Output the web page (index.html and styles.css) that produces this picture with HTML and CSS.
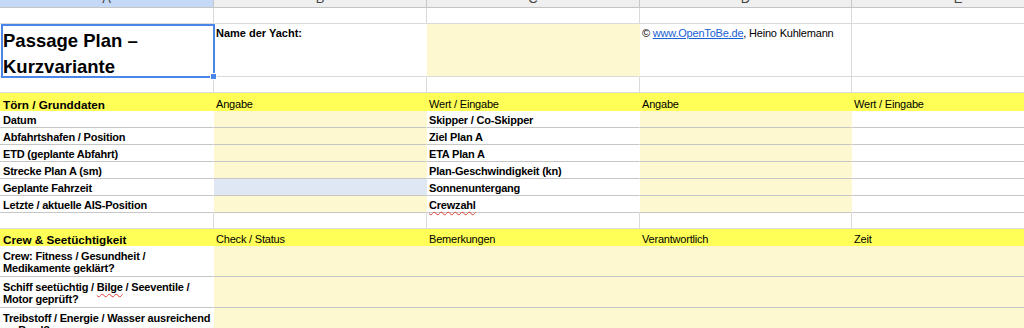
FILE: index.html
```html
<!DOCTYPE html>
<html lang="de">
<head>
<meta charset="utf-8">
<title>Passage Plan – Kurzvariante</title>
<link rel="stylesheet" href="styles.css">
</head>
<body>
<div class="sheet">
  <div class="hd sel"><span>A</span></div>
  <div class="hd"><span>B</span></div>
  <div class="hd"><span>C</span></div>
  <div class="hd"><span>D</span></div>
  <div class="hd"><span>E</span></div>

  <div class="c"></div><div class="c"></div><div class="c"></div><div class="c"></div><div class="c"></div>

  <div class="c title"><span class="t">Passage Plan –<br>Kurzvariante</span></div>
  <div class="c top b nr wide"><span class="t">Name der Yacht:</span></div>
  <div class="c ly"></div>
  <div class="c top"><span class="t">© <a class="link" href="#">www.OpenToBe.de</a>, Heino Kuhlemann</span></div>
  <div class="c"></div>

  <div class="c"></div><div class="c"></div><div class="c"></div><div class="c"></div><div class="c"></div>

  <div class="c yh b first sect"><span class="t">Törn / Grunddaten</span></div>
  <div class="c yh"><span class="t">Angabe</span></div>
  <div class="c yh"><span class="t">Wert / Eingabe</span></div>
  <div class="c yh"><span class="t">Angabe</span></div>
  <div class="c yh"><span class="t">Wert / Eingabe</span></div>

  <div class="c d b nr first"><span class="t">Datum</span></div>
  <div class="c d ly"></div>
  <div class="c d b nr"><span class="t">Skipper / Co-Skipper</span></div>
  <div class="c d ly"></div>
  <div class="c d"></div>

  <div class="c d b nr first"><span class="t">Abfahrtshafen / Position</span></div>
  <div class="c d ly"></div>
  <div class="c d b nr"><span class="t">Ziel Plan A</span></div>
  <div class="c d ly"></div>
  <div class="c d"></div>

  <div class="c d b nr first"><span class="t">ETD (geplante Abfahrt)</span></div>
  <div class="c d ly"></div>
  <div class="c d b nr"><span class="t">ETA Plan A</span></div>
  <div class="c d ly"></div>
  <div class="c d"></div>

  <div class="c d b nr first"><span class="t">Strecke Plan A (sm)</span></div>
  <div class="c d ly"></div>
  <div class="c d b nr"><span class="t">Plan-Geschwindigkeit (kn)</span></div>
  <div class="c d ly"></div>
  <div class="c d"></div>

  <div class="c d b nr first"><span class="t">Geplante Fahrzeit</span></div>
  <div class="c d lb"></div>
  <div class="c d b nr"><span class="t">Sonnenuntergang</span></div>
  <div class="c d ly"></div>
  <div class="c d"></div>

  <div class="c d b nr first"><span class="t">Letzte / aktuelle AIS-Position</span></div>
  <div class="c d ly"></div>
  <div class="c d b nr vis"><span class="t"><span class="spell">Crewzahl</span></span></div>
  <div class="c d ly"></div>
  <div class="c d"></div>

  <div class="c"></div><div class="c"></div><div class="c"></div><div class="c"></div><div class="c"></div>

  <div class="c yh b first sect"><span class="t">Crew &amp; Seetüchtigkeit</span></div>
  <div class="c yh"><span class="t">Check / Status</span></div>
  <div class="c yh"><span class="t">Bemerkungen</span></div>
  <div class="c yh"><span class="t">Verantwortlich</span></div>
  <div class="c yh"><span class="t">Zeit</span></div>

  <div class="c d b nr first wrap"><span class="t">Crew: Fitness / Gesundheit /<br>Medikamente geklärt?</span></div>
  <div class="c d ly span"></div>

  <div class="c d b nr first wrap"><span class="t">Schiff seetüchtig / <span class="spell">Bilge</span> / Seeventile /<br>Motor geprüft?</span></div>
  <div class="c d ly span"></div>

  <div class="c d b nr first wrap"><span class="t">Treibstoff / Energie / Wasser ausreichend<br>an Bord?</span></div>
  <div class="c d ly span"></div>

  <div class="selection"><span class="handle"></span></div>
</div>
</body>
</html>
```

FILE: styles.css
```css
html, body {
  margin: 0;
  padding: 0;
  background: #ffffff;
  overflow: hidden;
}

body {
  font-family: "Liberation Sans", Arial, sans-serif;
  color: #000;
}

.sheet {
  position: relative;
  display: grid;
  width: 1065px;
  grid-template-columns: 214px 213px 213px 212px 213px;
  grid-template-rows: 8px 16px 53px 16px 18px repeat(6, 17px) 16px 17px 31px 31px 31px;
}

.hd {
  box-sizing: border-box;
  background: #efefef;
  border-right: 1px solid #c8c8c8;
  border-bottom: 1px solid #c4c4c4;
  overflow: hidden;
  text-align: center;
  font-size: 13px;
  line-height: 13px;
  color: #444;
}

.hd span {
  display: block;
  margin-top: -8px;
}

.hd.sel {
  background: #c5d9f6;
}

.c {
  box-sizing: border-box;
  border-right: 1px solid #dadada;
  border-bottom: 1px solid #dadada;
  padding: 0 2px;
  font-size: 11px;
  line-height: 13px;
  letter-spacing: -0.2px;
  display: flex;
  align-items: flex-end;
  white-space: nowrap;
  overflow: hidden;
}

.c.vis {
  overflow: visible;
  position: relative;
  z-index: 1;
}

.t {
  display: block;
}

.c.first {
  padding-left: 3px;
}

.b {
  font-weight: bold;
}

.sect {
  font-size: 11.7px;
  letter-spacing: 0;
}

.wide {
  letter-spacing: 0;
}

.nr {
  border-right-color: transparent;
}

.d {
  border-bottom-color: #c6c6c6;
}

.ly {
  background: #fef8d1;
  border-right-color: transparent;
}

.lb {
  background: #dfe7f4;
  border-right-color: transparent;
}

.yh {
  background: #ffff57;
  border-right-color: transparent;
  border-bottom-width: 0;
}

.span {
  grid-column: 2 / 6;
}

.wrap {
  line-height: 12px;
  padding-bottom: 2px;
}

.top {
  align-items: flex-start;
  padding-top: 3px;
}

.title {
  align-items: flex-start;
  padding: 4px 3px 0;
  font-size: 18.5px;
  line-height: 26px;
  letter-spacing: 0;
  font-weight: bold;
}

.link {
  color: #1a5fd6;
  text-decoration: underline;
}

.spell {
  text-decoration: underline wavy #e0403a;
  text-decoration-thickness: 1px;
  text-underline-offset: 2px;
}

.selection {
  position: absolute;
  left: 1px;
  top: 24px;
  width: 214px;
  height: 54px;
  box-sizing: border-box;
  border: 2px solid #4a86e8;
  pointer-events: none;
}

.handle {
  position: absolute;
  right: -4px;
  bottom: -4px;
  width: 5px;
  height: 5px;
  background: #4a86e8;
  border: 1px solid #ffffff;
}
```
